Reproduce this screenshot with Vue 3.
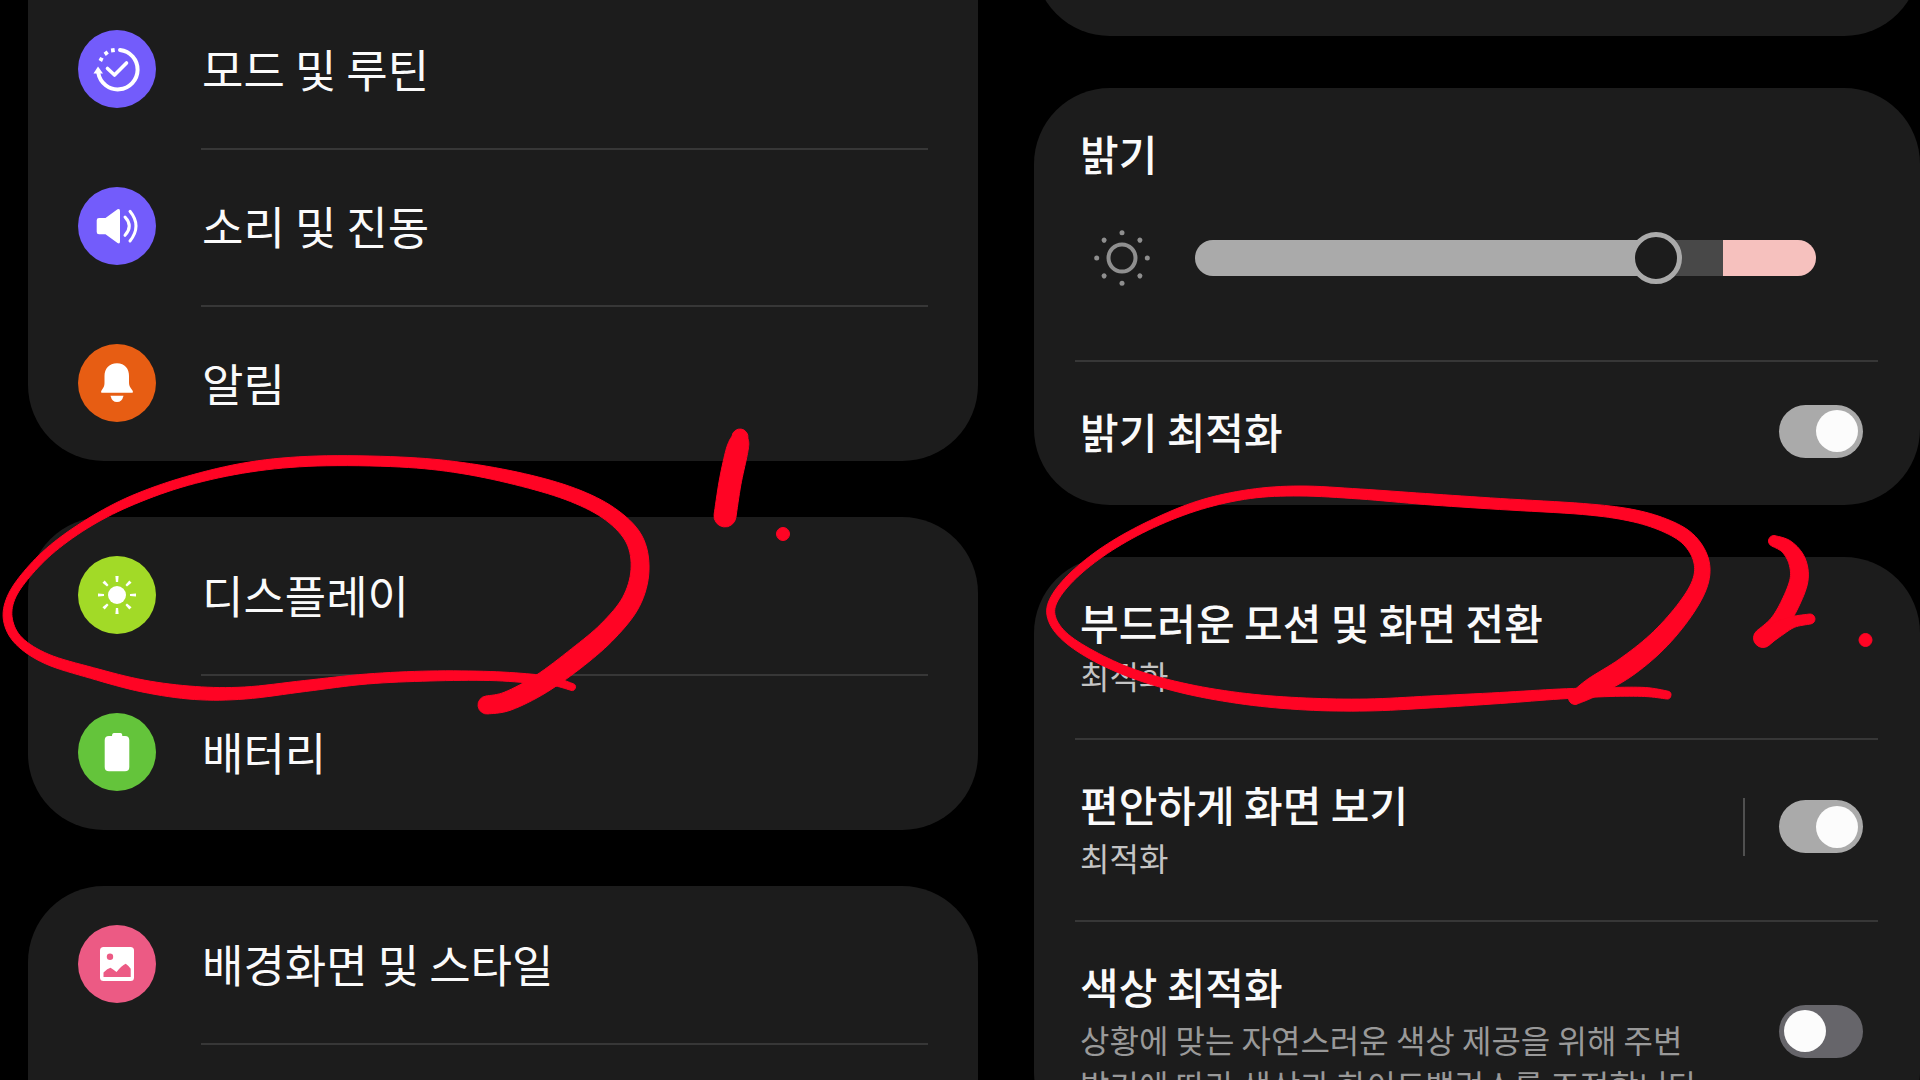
<template>
  <main class="page">
    <nav class="column" aria-label="설정">
      <ul v-for="(grup, g) in menu" :key="g" class="card menu">
        <li v-for="item in grup" :key="item.name">
          <a href="#" class="menu-row" @click.prevent>
            <svg class="icon" :class="item.icon" viewBox="0 0 78 78" aria-hidden="true">
              <circle class="disc" cx="39" cy="39" r="39" />
              <g v-if="item.icon === 'modes'">
                <path class="line" d="M42 19.9A19.8 19.8 0 1 1 20.3 43" stroke-width="4" />
                <path d="M20 36.5L15.5 43.5H25z" />
                <path d="M32.8 18.6l3.6-.7.6 4-3.7.6zM25.6 22.8l3-2.2 2.2 3-3 2.3zM20.6 30l1.6-3 3.4 1.6-1.6 3.4z" />
                <path class="line" d="M29.5 38.5L36.5 45L48.5 33" stroke-width="3.6" />
              </g>
              <g v-else-if="item.icon === 'sound'">
                <path d="M21 31h6.500L39.500 22.300Q42 21 42 24V54.300Q42 57.500 39.500 56L27.500 47.200H21Q18.700 47.200 18.700 45V33.200Q18.700 31 21 31z" />
                <path class="line" d="M47 30Q55.500 39 47 48.300M52 24.300Q64 39 52 54" stroke-width="3" />
              </g>
              <g v-else-if="item.icon === 'bell'">
                <path d="M39 19.300c8 0 12 5.700 12 12.700v6c0 4 1 5 3.500 8.500.8 1.500.5 2.300-1 2.300h-29c-1.500 0-1.800-.8-1-2.300C26 43 26.500 42 26.500 38v-6c0-7 4.500-12.700 12.500-12.700z" />
                <path d="M32.500 51.700h13Q44 58 39 58t-6.500-6.300z" />
              </g>
              <g v-else-if="item.icon === 'display'">
                <circle cx="39" cy="39" r="9" />
                <path v-for="a in 8" :key="a" d="M37.400 20h3.200l-.5 6h-2.200z" :transform="`rotate(${a * 45} 39 39)`" />
              </g>
              <g v-else-if="item.icon === 'battery'">
                <path d="M36 20h6.500Q44.300 20 44.300 23H47q4.300 0 4.300 4.300V54q0 4.300-4.300 4.300H31q-4.300 0-4.300-4.300V27.300Q26.700 23 31 23h3Q34 20 36 20z" />
              </g>
              <g v-else>
                <rect x="22" y="22" width="34" height="34" rx="3.500" />
                <circle class="disc" cx="32" cy="31.700" r="3.200" />
                <path class="disc" d="M25.500 52v-4.500q4-4 7-4.800 3 1.800 6 4.300 5-6.500 9.200-8.300 3 2 5 5V52z" />
              </g>
            </svg>
            <span>{{ item.name }}</span>
          </a>
        </li>
      </ul>
    </nav>

    <section class="column" aria-label="디스플레이">
      <div class="card rest"></div>

      <div class="card">
        <div class="brightness">
          <label class="title" for="brightness">밝기</label>
          <div class="slider">
            <svg class="sun" viewBox="0 0 56 56" aria-hidden="true">
              <circle cx="28" cy="28" r="13.500" fill="none" stroke="#8f8f8f" stroke-width="4" />
              <circle v-for="a in 8" :key="a" cx="28" cy="2.700" r="2.500" fill="#8f8f8f" :transform="`rotate(${a * 45} 28 28)`" />
            </svg>
            <input id="brightness" v-model="brightness" type="range" min="0" max="255" :style="{ '--fill': brightness / 2.55 + '%' }">
          </div>
        </div>
        <div class="option single">
          <label class="title" for="adaptive">밝기 최적화</label>
          <input id="adaptive" v-model="adaptive" class="switch" type="checkbox" role="switch">
        </div>
      </div>

      <div class="card">
        <a href="#" class="option" @click.prevent>
          <span class="text">
            <span class="title">부드러운 모션 및 화면 전환</span>
            <span class="sub">최적화</span>
          </span>
        </a>
        <div class="option">
          <label class="text" for="comfort">
            <span class="title">편안하게 화면 보기</span>
            <span class="sub">최적화</span>
          </label>
          <span class="bar"></span>
          <input id="comfort" v-model="comfort" class="switch" type="checkbox" role="switch">
        </div>
        <div class="option">
          <label class="text" for="tone">
            <span class="title">색상 최적화</span>
            <span class="sub dim">상황에 맞는 자연스러운 색상 제공을 위해 주변 밝기에 따라 색상과 화이트밸런스를 조정합니다.</span>
          </label>
          <input id="tone" v-model="tone" class="switch" type="checkbox" role="switch">
        </div>
      </div>
    </section>

    <svg class="ink" viewBox="0 0 1920 1080" preserveAspectRatio="none" aria-hidden="true">
      <path v-for="(s, i) in strokes" :key="i" :d="outline(s)" />
      <circle cx="783" cy="534" r="6.500" />
      <circle cx="1865.500" cy="640" r="6.500" />
    </svg>
  </main>
</template>

<script setup>
import { ref } from 'vue'

const menu = [
  [
    { name: '모드 및 루틴', icon: 'modes' },
    { name: '소리 및 진동', icon: 'sound' },
    { name: '알림', icon: 'bell' }
  ],
  [
    { name: '디스플레이', icon: 'display' },
    { name: '배터리', icon: 'battery' }
  ],
  [
    { name: '배경화면 및 스타일', icon: 'wallpaper' }
  ]
]

const brightness = ref(195)
const adaptive = ref(true)
const comfort = ref(true)
const tone = ref(false)

// pen strokes: x, y, width
const strokes = [
  [
    [487, 705, 18], [508, 701, 19], [541, 684, 20], [578, 657, 21], [608, 631, 20], [631, 602, 19], [640, 570, 18], [634, 539, 17],
    [610, 514, 15], [573, 495, 14], [523, 480, 13], [462, 468, 11], [400, 462, 10], [317, 461, 10], [250, 467, 10], [187, 481, 9],
    [133, 500, 9], [90, 522, 8], [53, 548, 8], [27, 574, 8], [11, 598, 8], [8, 620, 9], [19, 641, 9], [47, 659, 10], [92, 673, 11], [143, 686, 12],
    [195, 693, 13], [245, 693, 12], [305, 686, 11], [367, 679, 10], [430, 676, 10], [490, 676, 9], [535, 679, 9], [556, 682, 8], [572, 687, 7]
  ],
  [[740, 437, 16], [739, 443, 20], [736, 455, 22], [730, 483, 22], [725, 516, 22]],
  [
    [1575, 698, 13], [1593, 687, 19], [1625, 668, 21], [1657, 642, 20], [1684, 611, 18], [1700, 583, 16], [1701, 560, 15], [1688, 539, 14],
    [1664, 525, 13], [1630, 515, 12], [1583, 509, 11], [1500, 504, 11], [1425, 499, 11], [1360, 494, 10], [1300, 491, 10], [1250, 494, 9],
    [1200, 505, 9], [1152, 524, 8], [1110, 547, 8], [1077, 572, 8], [1056, 596, 8], [1051, 615, 8], [1063, 635, 8], [1092, 655, 9],
    [1134, 674, 9], [1187, 689, 10], [1246, 699, 11], [1306, 704, 12], [1367, 705, 12], [1430, 702, 12], [1500, 698, 11], [1560, 694, 10],
    [1610, 692, 9], [1645, 692, 9], [1667, 695, 8]
  ],
  [[1774, 541, 11], [1787, 547, 14], [1797, 561, 17], [1799, 580, 18], [1790, 604, 18], [1778, 624, 18], [1763, 638, 19]],
  [[1763, 638, 18], [1778, 629, 15], [1793, 622, 11], [1810, 619, 10]]
]

const mix = (a, b, c, d, t) =>
  0.5 * (2 * b + (c - a) * t + (2 * a - 5 * b + 4 * c - d) * t * t + (3 * b - a - 3 * c + d) * t * t * t)

// smooths the points and walks down both sides of the stroke
const outline = pts => {
  const line = []
  for (let i = 0; i < pts.length - 1; i++) {
    const p = [pts[i - 1] || pts[i], pts[i], pts[i + 1], pts[i + 2] || pts[i + 1]]
    for (let t = 0; t < 1; t += 0.125) line.push([0, 1, 2].map(k => mix(p[0][k], p[1][k], p[2][k], p[3][k], t)))
  }
  line.push(pts[pts.length - 1])
  const side = sign => line.map(([x, y, w], i) => {
    const a = line[i - 1] || line[i]
    const b = line[i + 1] || line[i]
    const len = Math.hypot(b[0] - a[0], b[1] - a[1]) || 1
    return `${x - sign * (b[1] - a[1]) / len * w / 2},${y + sign * (b[0] - a[0]) / len * w / 2}`
  })
  const r = line[line.length - 1][2] / 2
  const r0 = line[0][2] / 2
  const left = side(1)
  const right = side(-1).reverse()
  return `M${left.join('L')}A${r},${r} 0 0 0 ${right[0]}L${right.join('L')}A${r0},${r0} 0 0 0 ${left[0]}Z`
}
</script>

<style>
body {
  margin: 0;
  background: #000;
}
</style>

<style scoped>
.page {
  position: relative;
  display: grid;
  grid-template-columns: 950fr 886fr;
  grid-template-rows: 100%;
  gap: 56px;
  height: 100vh;
  padding-left: 28px;
  overflow: hidden;
  box-sizing: border-box;
  color: #fafafa;
  font-family: "Noto Sans CJK KR", "Noto Sans", sans-serif;
  word-break: keep-all;
}

.column {
  display: flex;
  flex-direction: column;
  gap: 56px;
  min-width: 0;
}

section.column {
  gap: 52px;
}

.card {
  flex: none;
  margin: 0;
  padding: 0;
  list-style: none;
  background: #1c1c1c;
  border-radius: 76px;
}

/* the list is scrolled a little past its start */
.menu:first-child {
  margin-top: -9px;
  border-radius: 0 0 76px 76px;
}

.menu:last-child {
  flex: 1;
  border-radius: 76px 76px 0 0;
}

.rest {
  height: 160px;
  margin-top: -124px;
}

.menu-row {
  display: flex;
  align-items: center;
  gap: 46px;
  padding: 39px 36px 39px 50px;
  color: inherit;
  font-size: 45px;
  line-height: 78px;
  text-decoration: none;
}

.menu li + li::before, .menu:last-child li::after {
  content: "";
  display: block;
  height: 2px;
  margin: 1px 50px -2px 173px;
  background: #373737;
}

.icon {
  flex: none;
  width: 78px;
  height: 78px;
  fill: #fff;
}

.line {
  fill: none;
  stroke: #fff;
  stroke-linecap: round;
  stroke-linejoin: round;
}

.modes .disc, .sound .disc { fill: #735cfb; }
.bell .disc { fill: #e75d13; }
.display .disc { fill: #a2da27; }
.battery .disc { fill: #64c43b; }
.wallpaper .disc { fill: #ec5a84; }

.title {
  display: block;
  font-size: 42px;
  font-weight: 500;
  line-height: 62px;
}

.sub {
  display: block;
  color: #c4c4c4;
  font-size: 32px;
  line-height: 45px;
}

.dim {
  color: #999;
}

.brightness {
  padding: 34px 104px 75px 46px;
}

.slider {
  display: flex;
  align-items: center;
  gap: 45px;
  padding: 46px 0 0 14px;
}

.sun {
  flex: none;
  width: 56px;
  height: 56px;
}

.slider input {
  flex: 1;
  min-width: 0;
  height: 56px;
  margin: 0;
  background: none;
  appearance: none;
}

.slider input::-webkit-slider-runnable-track {
  height: 36px;
  border-radius: 18px;
  background: linear-gradient(to right, #aaa var(--fill), #484848 var(--fill) 85%, #f6c1be 85%);
}

.slider input::-webkit-slider-thumb {
  width: 52px;
  height: 52px;
  margin-top: -8px;
  border: 5px solid #aaa;
  border-radius: 50%;
  box-sizing: border-box;
  background: #1c1c1c;
  appearance: none;
}

.option {
  position: relative;
  display: flex;
  align-items: center;
  padding: 34px 57px 41px 46px;
  color: inherit;
  text-decoration: none;
}

.single {
  justify-content: space-between;
  padding-top: 39px;
  padding-bottom: 43px;
}

.brightness + .option::before, .option + .option::before {
  content: "";
  position: absolute;
  top: -1px;
  left: 41px;
  right: 42px;
  height: 2px;
  background: #373737;
}

.text {
  flex: 1;
  padding-right: 34px;
}

.bar {
  width: 2px;
  height: 58px;
  margin-right: 34px;
  background: #505050;
}

.switch {
  flex: none;
  display: flex;
  align-items: center;
  width: 84px;
  height: 53px;
  margin: 0;
  padding: 0 5px;
  border-radius: 27px;
  box-sizing: border-box;
  background: #66656a;
  appearance: none;
}

.switch::before {
  content: "";
  width: 42px;
  height: 42px;
  border-radius: 50%;
  background: #fcfcfc;
}

.switch:checked {
  justify-content: flex-end;
  background: #aaa;
}

.ink {
  position: absolute;
  top: 0;
  left: 0;
  width: 100%;
  height: 100%;
  fill: #ff0424;
  stroke: #ff0424;
  stroke-width: 1;
  pointer-events: none;
}
</style>
